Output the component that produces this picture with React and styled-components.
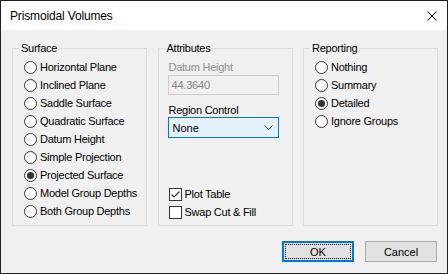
import React from 'react'
import styled, { createGlobalStyle } from 'styled-components'

const GlobalStyle = createGlobalStyle`
  html, body {
    margin: 0;
    padding: 0;
    background: #202020;
  }
  body {
    font-family: 'Liberation Sans', Arial, sans-serif;
    font-size: 11px;
    color: #000;
  }
`

const surfaceOptions = [
  'Horizontal Plane',
  'Inclined Plane',
  'Saddle Surface',
  'Quadratic Surface',
  'Datum Height',
  'Simple Projection',
  'Projected Surface',
  'Model Group Depths',
  'Both Group Depths'
]

const reportOptions = ['Nothing', 'Summary', 'Detailed', 'Ignore Groups']

const Radio = ({ label, checked }) => (
  <Row>
    <RadioDot checked={checked} />
    <Label>{label}</Label>
  </Row>
)

const Check = ({ label, checked }) => (
  <Row indent>
    <CheckBox>
      {checked && (
        <svg width="11" height="11" viewBox="0 0 11 11">
          <polyline points="1.5,5.5 4,8 9.5,2.5" fill="none" stroke="#333" strokeWidth="1.2" />
        </svg>
      )}
    </CheckBox>
    <Label>{label}</Label>
  </Row>
)

export default function App () {
  return (
    <>
      <GlobalStyle />
      <Window>
        <TitleBar>
          <Title>Prismoidal Volumes</Title>
          <svg width="10" height="10" viewBox="0 0 10 10">
            <path d="M0.5 0.5 L9.5 9.5 M9.5 0.5 L0.5 9.5" stroke="#000" strokeWidth="1" />
          </svg>
        </TitleBar>
        <Body>
          <Groups>
            <Group>
              <Legend>Surface</Legend>
              <List>
                {surfaceOptions.map(o => (
                  <Radio key={o} label={o} checked={o === 'Projected Surface'} />
                ))}
              </List>
            </Group>
            <Group>
              <Legend>Attributes</Legend>
              <Column>
                <FieldLabel disabled>Datum Height</FieldLabel>
                <TextBox>44.3640</TextBox>
                <FieldLabel gap>Region Control</FieldLabel>
                <Combo>
                  <span>None</span>
                  <svg width="9" height="5" viewBox="0 0 9 5">
                    <polyline points="0.5,0.5 4.5,4.5 8.5,0.5" fill="none" stroke="#333" strokeWidth="1" />
                  </svg>
                </Combo>
                <Checks>
                  <Check label="Plot Table" checked />
                  <Check label="Swap Cut & Fill" />
                </Checks>
              </Column>
            </Group>
            <Group>
              <Legend>Reporting</Legend>
              <List>
                {reportOptions.map(o => (
                  <Radio key={o} label={o} checked={o === 'Detailed'} />
                ))}
              </List>
            </Group>
          </Groups>
          <Buttons>
            <Button primary>OK</Button>
            <Button>Cancel</Button>
          </Buttons>
        </Body>
      </Window>
    </>
  )
}

const Window = styled.div`
  margin: 1px;
  width: 446px;
  height: 272px;
  background: #f0f0f0;
  display: flex;
  flex-direction: column;
`

const TitleBar = styled.div`
  height: 29px;
  background: #fff;
  display: flex;
  align-items: center;
  justify-content: space-between;
  padding: 0 10px 0 9px;
  box-sizing: border-box;
`

const Title = styled.span`
  font-size: 12px;
  letter-spacing: -0.15px;
  padding-top: 1px;
`

const Body = styled.div`
  flex: 1;
  padding: 11px 9px 0 11px;
  display: flex;
  flex-direction: column;
`

const Groups = styled.div`
  display: flex;
  justify-content: space-between;
`

const Group = styled.fieldset`
  margin: 0;
  padding: 0 6px 4px;
  width: 135px;
  height: 185px;
  box-sizing: border-box;
  min-width: 0;
  border: 1px solid #dcdcdc;
  display: flex;
  flex-direction: column;
`

const Legend = styled.legend`
  padding: 0 2px;
  line-height: 14px;
  height: 14px;
  letter-spacing: -0.25px;
`

const List = styled.div`
  padding: 3px 0 0 5px;
  display: flex;
  flex-direction: column;
`

const Column = styled.div`
  flex: 1;
  padding: 3px 0 0 3px;
  display: flex;
  flex-direction: column;
`

const Row = styled.div`
  height: 18px;
  display: flex;
  align-items: center;
  margin-left: ${p => (p.indent ? '1px' : '0')};
`

const Label = styled.span`
  letter-spacing: -0.25px;
  white-space: nowrap;
`

const RadioDot = styled.span`
  width: 13px;
  height: 13px;
  box-sizing: border-box;
  border: 1px solid #333;
  border-radius: 50%;
  background: #fff;
  margin-right: 3px;
  display: flex;
  align-items: center;
  justify-content: center;

  &::after {
    content: '';
    width: 7px;
    height: 7px;
    border-radius: 50%;
    background: #333;
    display: ${p => (p.checked ? 'block' : 'none')};
  }
`

const CheckBox = styled.span`
  width: 13px;
  height: 13px;
  box-sizing: border-box;
  border: 1px solid #333;
  background: #fff;
  margin-right: 3px;
  display: flex;
  align-items: center;
  justify-content: center;
`

const FieldLabel = styled.div`
  margin: ${p => (p.gap ? '8px' : '2px')} 0 0 1px;
  line-height: 14px;
  letter-spacing: -0.25px;
  color: ${p => (p.disabled ? '#8d8d8d' : '#000')};
`

const TextBox = styled.div`
  margin-top: 1px;
  width: 111px;
  height: 20px;
  box-sizing: border-box;
  border: 1px solid #cccccc;
  padding: 0 3px;
  display: flex;
  align-items: center;
  color: #838383;
  letter-spacing: -0.2px;
`

const Combo = styled.div`
  width: 111px;
  height: 21px;
  box-sizing: border-box;
  border: 1px solid #0078d7;
  background: #e5f1fb;
  padding: 0 5px 0 4px;
  display: flex;
  align-items: center;
  justify-content: space-between;
`

const Checks = styled.div`
  margin-top: auto;
  display: flex;
  flex-direction: column;
`

const Buttons = styled.div`
  margin-top: 15px;
  padding-right: 1px;
  display: flex;
  justify-content: flex-end;
  gap: 11px;
`

const Button = styled.button`
  width: 72px;
  height: 21px;
  margin: 0;
  padding: 0;
  font: inherit;
  color: #000;
  background: #e1e1e1;
  border: ${p => (p.primary ? '2px solid #0078d7' : '1px solid #adadad')};
  outline: ${p => (p.primary ? '1px dotted #000' : 'none')};
  outline-offset: -4px;
  box-sizing: border-box;
`
